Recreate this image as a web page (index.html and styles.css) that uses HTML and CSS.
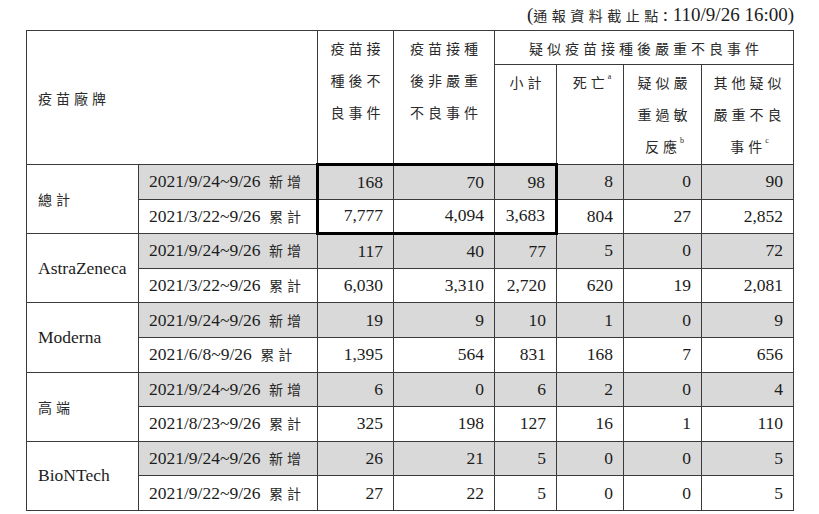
FILE: index.html
```html
<!DOCTYPE html>
<html lang="zh-Hant">
<head>
<meta charset="utf-8">
<title>疫苗接種後不良事件</title>
<link rel="stylesheet" href="styles.css">
</head>
<body>
<div class="sheet">
  <div class="note"><span>(</span><span class="zh">通報資料截止點</span><span>: 110/9/26 16:00)</span></div>
  <table class="report">
    <colgroup>
      <col class="c-brand"><col class="c-date"><col class="c-all"><col class="c-mild">
      <col class="c-sub"><col class="c-death"><col class="c-ana"><col class="c-other">
    </colgroup>
    <thead>
      <tr class="h1">
        <th class="zh brand-head" colspan="2" rowspan="2">疫苗廠牌</th>
        <th class="zh top" rowspan="2">疫苗接<br>種後不<br>良事件</th>
        <th class="zh top" rowspan="2">疫苗接種<br>後非嚴重<br>不良事件</th>
        <th class="zh top" colspan="4">疑似疫苗接種後嚴重不良事件</th>
      </tr>
      <tr class="h2">
        <th class="zh top">小計</th>
        <th class="zh top">死亡<sup>a</sup></th>
        <th class="zh top">疑似嚴<br>重過敏<br>反應<sup>b</sup></th>
        <th class="zh top">其他疑似<br>嚴重不良<br>事件<sup>c</sup></th>
      </tr>
    </thead>
    <tbody>
      <tr class="new">
        <td class="brand zh" rowspan="2">總計</td>
        <td class="date">2021/9/24~9/26 <span class="zh">新增</span></td>
        <td class="num bx-t bx-l">168</td><td class="num bx-t">70</td><td class="num bx-t bx-r">98</td>
        <td class="num">8</td><td class="num">0</td><td class="num">90</td>
      </tr>
      <tr class="cum">
        <td class="date">2021/3/22~9/26 <span class="zh">累計</span></td>
        <td class="num bx-b bx-l">7,777</td><td class="num bx-b">4,094</td><td class="num bx-b bx-r">3,683</td>
        <td class="num">804</td><td class="num">27</td><td class="num">2,852</td>
      </tr>
      <tr class="new">
        <td class="brand" rowspan="2">AstraZeneca</td>
        <td class="date">2021/9/24~9/26 <span class="zh">新增</span></td>
        <td class="num">117</td><td class="num">40</td><td class="num">77</td>
        <td class="num">5</td><td class="num">0</td><td class="num">72</td>
      </tr>
      <tr class="cum">
        <td class="date">2021/3/22~9/26 <span class="zh">累計</span></td>
        <td class="num">6,030</td><td class="num">3,310</td><td class="num">2,720</td>
        <td class="num">620</td><td class="num">19</td><td class="num">2,081</td>
      </tr>
      <tr class="new">
        <td class="brand" rowspan="2">Moderna</td>
        <td class="date">2021/9/24~9/26 <span class="zh">新增</span></td>
        <td class="num">19</td><td class="num">9</td><td class="num">10</td>
        <td class="num">1</td><td class="num">0</td><td class="num">9</td>
      </tr>
      <tr class="cum">
        <td class="date">2021/6/8~9/26 <span class="zh">累計</span></td>
        <td class="num">1,395</td><td class="num">564</td><td class="num">831</td>
        <td class="num">168</td><td class="num">7</td><td class="num">656</td>
      </tr>
      <tr class="new">
        <td class="brand zh" rowspan="2">高端</td>
        <td class="date">2021/9/24~9/26 <span class="zh">新增</span></td>
        <td class="num">6</td><td class="num">0</td><td class="num">6</td>
        <td class="num">2</td><td class="num">0</td><td class="num">4</td>
      </tr>
      <tr class="cum">
        <td class="date">2021/8/23~9/26 <span class="zh">累計</span></td>
        <td class="num">325</td><td class="num">198</td><td class="num">127</td>
        <td class="num">16</td><td class="num">1</td><td class="num">110</td>
      </tr>
      <tr class="new">
        <td class="brand" rowspan="2">BioNTech</td>
        <td class="date">2021/9/24~9/26 <span class="zh">新增</span></td>
        <td class="num">26</td><td class="num">21</td><td class="num">5</td>
        <td class="num">0</td><td class="num">0</td><td class="num">5</td>
      </tr>
      <tr class="cum">
        <td class="date">2021/9/22~9/26 <span class="zh">累計</span></td>
        <td class="num">27</td><td class="num">22</td><td class="num">5</td>
        <td class="num">0</td><td class="num">0</td><td class="num">5</td>
      </tr>
    </tbody>
  </table>
</div>
</body>
</html>
```
FILE: styles.css
```css
html, body {
  margin: 0;
  padding: 0;
  background: #ffffff;
}

body {
  font-family: "Liberation Serif", "Noto Sans CJK TC", serif;
  color: #1c1c1c;
}

.sheet {
  width: 768px;
  margin-left: 26px;
}

.zh {
  font-family: "Noto Sans CJK TC", "Noto Sans CJK SC", sans-serif;
  font-size: 14px;
  letter-spacing: 4px;
  color: #2a2a2a;
}

.note {
  height: 30px;
  line-height: 30px;
  text-align: right;
  font-size: 19px;
  white-space: nowrap;
}

.note .zh {
  font-size: 14px;
  letter-spacing: 4.5px;
}

.report {
  width: 768px;
  table-layout: fixed;
  border-collapse: collapse;
  font-size: 17.5px;
}

.c-brand { width: 112px; }
.c-date { width: 179px; }
.c-all { width: 76px; }
.c-mild { width: 101px; }
.c-sub { width: 62px; }
.c-death { width: 67px; }
.c-ana { width: 78px; }
.c-other { width: 92px; }

.report th,
.report td {
  border: 1px solid #3a3a3a;
  padding: 0;
}

.report th {
  font-weight: normal;
}

.h1 { height: 33px; }
.h2 { height: 100px; }

th.top {
  vertical-align: top;
  text-align: center;
  line-height: 32px;
  padding: 1px 0 0 4px;
}

th.brand-head {
  text-align: left;
  vertical-align: middle;
  padding-left: 11px;
}

.report sup {
  font-family: "Liberation Serif", serif;
  font-size: 8px;
  letter-spacing: 0;
  vertical-align: 9px;
  line-height: 0;
  margin-left: -1px;
}

.report tbody tr {
  height: 34.6px;
}

.report td {
  vertical-align: middle;
  white-space: nowrap;
}

.report tr.new td {
  background: #d9d9d9;
}

.report tr.new td.brand {
  background: #ffffff;
}

td.brand {
  padding-left: 11px;
}

td.brand.zh {
  font-size: 14px;
}

td.date {
  padding-left: 10px;
}

td.date .zh {
  padding-left: 4px;
}

td.num {
  text-align: right;
  padding-right: 10px;
}

.report td.bx-t { border-top: 3px solid #000; }
.report td.bx-b { border-bottom: 3px solid #000; }
.report td.bx-l { border-left: 3px solid #000; }
.report td.bx-r { border-right: 3px solid #000; }
```
